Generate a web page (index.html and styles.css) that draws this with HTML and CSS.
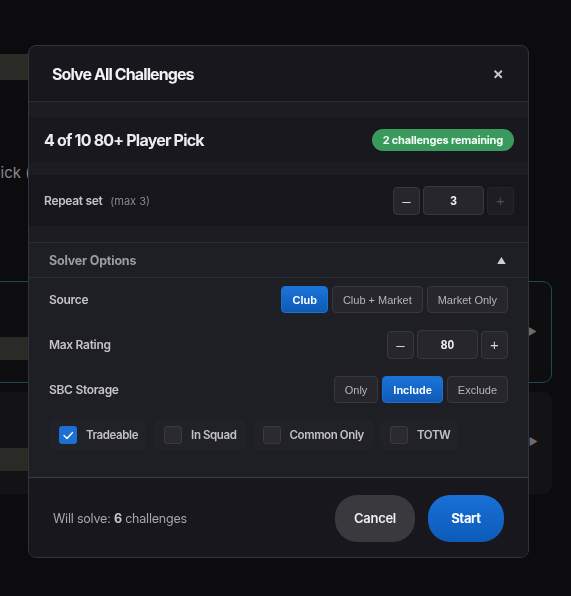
FILE: index.html
```html
<!DOCTYPE html>
<html lang="en">
<head>
<meta charset="utf-8">
<title>Solve All Challenges</title>
<link rel="stylesheet" href="styles.css">
</head>
<body>
<div class="page">
  <div class="bg-bar top"></div>
  <div class="bg-text">Pick (</div>
  <div class="bg-card teal">
    <div class="bg-bar inner"></div>
    <span class="bg-arrow">&#9654;</span>
  </div>
  <div class="bg-card plain">
    <div class="bg-bar inner"></div>
    <span class="bg-arrow">&#9654;</span>
  </div>
</div>

<div class="modal">
  <header class="modal-head">
    <h2 class="modal-title">Solve All Challenges</h2>
    <button class="close" aria-label="Close">&#215;</button>
  </header>

  <div class="modal-body">
    <div class="set-card">
      <span class="set-name">4 of 10 80+ Player Pick</span>
      <span class="badge">2 challenges remaining</span>
    </div>

    <div class="repeat-card">
      <span class="row-label">Repeat set <span class="hint">(max 3)</span></span>
      <div class="stepper">
        <button class="step">&#8211;</button>
        <div class="step-value">3</div>
        <button class="step disabled">+</button>
      </div>
    </div>

    <section class="options">
      <div class="options-head">
        <span>Solver Options</span>
        <span class="caret">&#9650;</span>
      </div>
      <div class="options-body">
        <div class="opt-row">
          <span class="opt-label">Source</span>
          <div class="seg">
            <button class="seg-btn active">Club</button>
            <button class="seg-btn">Club + Market</button>
            <button class="seg-btn">Market Only</button>
          </div>
        </div>
        <div class="opt-row tall">
          <span class="opt-label">Max Rating</span>
          <div class="stepper">
            <button class="step">&#8211;</button>
            <div class="step-value">80</div>
            <button class="step">+</button>
          </div>
        </div>
        <div class="opt-row">
          <span class="opt-label">SBC Storage</span>
          <div class="seg">
            <button class="seg-btn">Only</button>
            <button class="seg-btn active">Include</button>
            <button class="seg-btn">Exclude</button>
          </div>
        </div>
        <div class="checks">
          <label class="check-pill">
            <span class="box checked">
              <svg viewBox="0 0 18 18" width="18" height="18"><polyline points="5,9.5 8,12.5 13.5,6.5" fill="none" stroke="#fff" stroke-width="1.4" stroke-linecap="round" stroke-linejoin="round"/></svg>
            </span>
            Tradeable
          </label>
          <label class="check-pill"><span class="box"></span>In Squad</label>
          <label class="check-pill"><span class="box"></span>Common Only</label>
          <label class="check-pill"><span class="box"></span>TOTW</label>
        </div>
      </div>
    </section>
  </div>

  <footer class="modal-foot">
    <span class="summary">Will solve: <b>6</b> challenges</span>
    <div class="actions">
      <button class="btn cancel">Cancel</button>
      <button class="btn start">Start</button>
    </div>
  </footer>
</div>
</body>
</html>
```

FILE: styles.css
```css
* { box-sizing: border-box; }

html, body {
  margin: 0;
  padding: 0;
  background: #0c0c0e;
  font-family: Inter, "Noto Sans", sans-serif;
}

button {
  font-family: inherit;
  cursor: pointer;
}

/* ---------- background page ---------- */
.page {
  width: 571px;
  height: 596px;
  overflow: hidden;
  padding-top: 54px;
}

.bg-bar {
  background: #2a2a27;
}

.bg-bar.top {
  width: 220px;
  height: 26px;
}

.bg-text {
  margin-top: 83px;
  margin-left: -9px;
  color: #8a8a8c;
  font-size: 15px;
  line-height: 20px;
  white-space: nowrap;
}

.bg-card {
  position: relative;
  width: 562px;
  margin-left: -10px;
  height: 102px;
  border-radius: 9px;
}

.bg-card.teal {
  margin-top: 98px;
  border: 1px solid #1c4b52;
  background: #0e0e10;
  padding-top: 55px;
}

.bg-card.plain {
  margin-top: 9px;
  background: #131316;
  padding-top: 56px;
}

.bg-bar.inner {
  width: 200px;
  height: 23px;
}

.bg-arrow {
  position: absolute;
  right: 14px;
  top: 43px;
  color: #6c6c70;
  font-size: 10px;
  line-height: 12px;
}

/* ---------- modal ---------- */
.modal {
  position: fixed;
  left: 28px;
  top: 45px;
  width: 501px;
  height: 513px;
  display: flex;
  flex-direction: column;
  background: #17171d;
  border: 1px solid #33333a;
  border-radius: 8px;
  overflow: hidden;
}

.modal-head {
  height: 56px;
  flex: none;
  display: flex;
  align-items: center;
  justify-content: space-between;
  padding: 0 24px 0 23px;
  border-bottom: 1px solid #2b2b31;
}

.modal-title {
  margin: 0;
  color: #f2f2f4;
  font-size: 16px;
  font-weight: 700;
  letter-spacing: -0.9px;
}

.close {
  background: none;
  border: none;
  padding: 0;
  color: #c9c9cd;
  font-size: 17px;
  line-height: 17px;
  font-weight: 600;
}

.modal-body {
  flex: 1;
  display: flex;
  flex-direction: column;
  background: #1c1c22;
  padding-top: 15px;
}

.set-card {
  height: 45px;
  display: flex;
  align-items: center;
  justify-content: space-between;
  padding: 0 14px 0 15px;
  background: #18181e;
}

.set-name {
  color: #ececef;
  font-size: 16px;
  font-weight: 700;
  letter-spacing: -0.8px;
}

.badge {
  height: 22px;
  padding: 0 11px;
  display: flex;
  align-items: center;
  border-radius: 11px;
  background: #3a9a5e;
  color: #f4fff7;
  font-size: 11px;
  font-weight: 700;
  letter-spacing: -0.2px;
}

.repeat-card {
  margin-top: 13px;
  height: 51px;
  display: flex;
  align-items: center;
  justify-content: space-between;
  padding: 0 14px 0 15px;
  background: #16161c;
}

.row-label {
  color: #c4c4c8;
  font-size: 12px;
  font-weight: 600;
  letter-spacing: -0.3px;
}

.hint {
  margin-left: 5px;
  color: #87878c;
  font-size: 11px;
  font-weight: 400;
  letter-spacing: 0;
}

.stepper {
  display: flex;
  align-items: center;
  gap: 3px;
}

.step {
  width: 27px;
  height: 28px;
  padding: 0;
  border: 1px solid #37373e;
  border-radius: 4px;
  background: #26262c;
  color: #d6d6da;
  font-family: "Liberation Sans", Arial, sans-serif;
  font-size: 15px;
  line-height: 26px;
}

.step.disabled {
  background: #1d1d23;
  border-color: #24242a;
  color: #4e4e55;
}

.step-value {
  width: 61px;
  height: 29px;
  display: flex;
  align-items: center;
  justify-content: center;
  border: 1px solid #37373e;
  border-radius: 4px;
  background: #26262c;
  color: #f0f0f2;
  font-family: "Liberation Sans", Arial, sans-serif;
  font-size: 12px;
  font-weight: 700;
}

.options {
  margin-top: 16px;
  flex: 1;
  display: flex;
  flex-direction: column;
  border-top: 1px solid #2c2c33;
  background: #1e1e25;
}

.options-head {
  height: 35px;
  flex: none;
  display: flex;
  align-items: center;
  justify-content: space-between;
  padding: 0 22px 0 20px;
  border-bottom: 1px solid #2c2c33;
  color: #9c9ca2;
  font-size: 12.5px;
  font-weight: 700;
  letter-spacing: -0.2px;
}

.caret {
  color: #cfcfd3;
  font-size: 9px;
}

.options-body {
  flex: 1;
  display: flex;
  flex-direction: column;
  gap: 17px;
  padding: 8px 20px 27px 20px;
}

.opt-row {
  height: 27px;
  display: flex;
  align-items: center;
  justify-content: space-between;
}

.opt-row.tall {
  height: 29px;
}

.opt-label {
  color: #c4c4c8;
  font-size: 12px;
  font-weight: 600;
  letter-spacing: -0.3px;
}

.seg {
  display: flex;
  gap: 4px;
}

.seg-btn {
  height: 27px;
  padding: 0 10px;
  border: 1px solid #37373e;
  border-radius: 4px;
  background: #26262c;
  color: #b4b4b9;
  font-family: "Liberation Sans", Arial, sans-serif;
  font-size: 11px;
}

.seg-btn.active {
  border-color: #1f6fd0;
  background: linear-gradient(#1b74d9, #0e5ab6);
  color: #ffffff;
  font-weight: 700;
}

.checks {
  height: 30px;
  display: flex;
  gap: 7px;
}

.check-pill {
  height: 30px;
  display: flex;
  align-items: center;
  gap: 9px;
  padding: 0 9px 0 10px;
  border-radius: 6px;
  background: #212128;
  color: #c2c2c6;
  font-size: 11.5px;
  font-weight: 600;
  letter-spacing: -0.4px;
}

.box {
  width: 18px;
  height: 18px;
  flex: none;
  display: flex;
  border: 1px solid #3a3a41;
  border-radius: 3px;
  background: #2a2a30;
}

.box.checked {
  border: none;
  background: #1c6fd3;
}

.modal-foot {
  height: 81px;
  flex: none;
  display: flex;
  align-items: center;
  justify-content: space-between;
  padding: 0 24px 0 24px;
  border-top: 1px solid #3a3a40;
  background: #17171d;
}

.summary {
  color: #a6a6ab;
  font-size: 12.5px;
  letter-spacing: -0.2px;
}

.summary b {
  color: #c8c8cc;
  font-weight: 700;
}

.actions {
  display: flex;
  gap: 13px;
}

.btn {
  height: 47px;
  border: none;
  border-radius: 22px;
  font-size: 13px;
  letter-spacing: -0.3px;
}

.btn.cancel {
  width: 80px;
  background: #3a3a3e;
  color: #f0f0f2;
  font-weight: 600;
}

.btn.start {
  width: 76px;
  background: linear-gradient(#1a70d6, #0c5bb8);
  color: #ffffff;
  font-weight: 700;
}
```
